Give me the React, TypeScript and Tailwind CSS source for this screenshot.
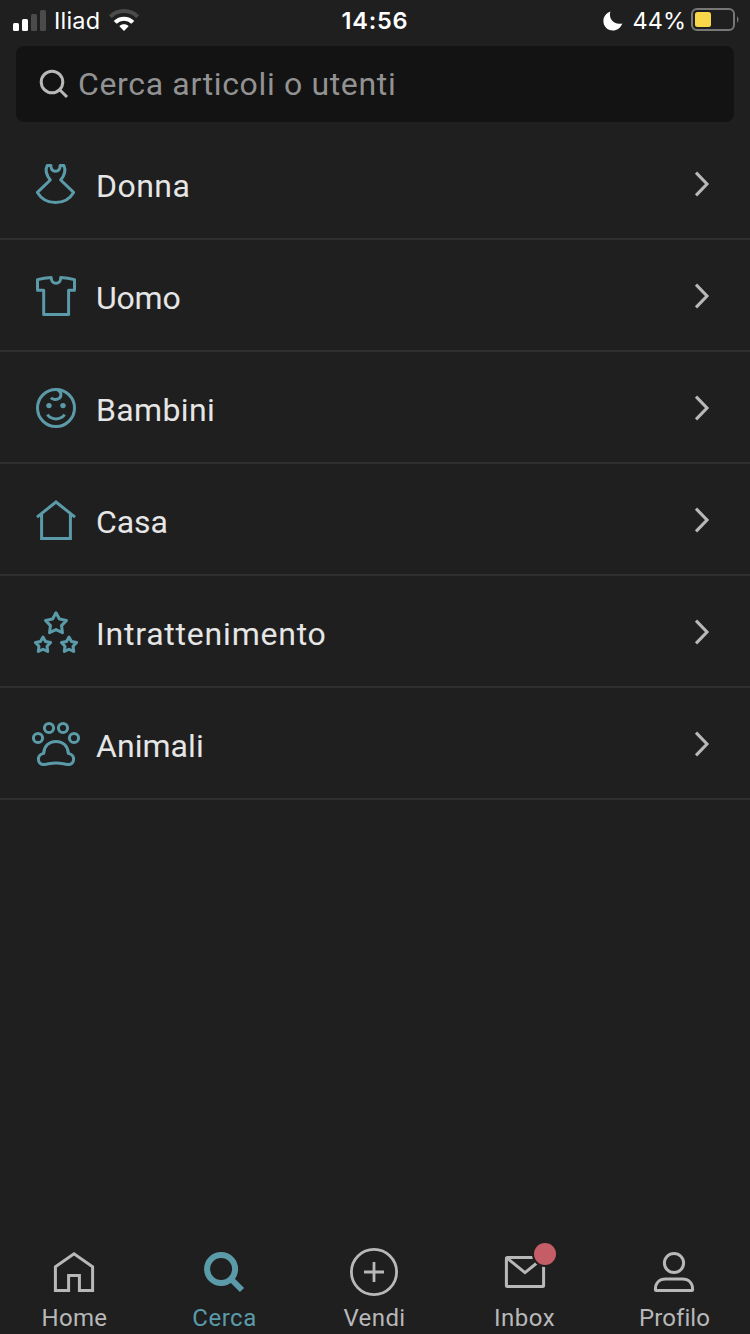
import React from "react";

type IconProps = { children: React.ReactNode; className?: string; width?: number };

function Glyph({ children, className = "", width = 3 }: IconProps) {
  return (
    <svg
      viewBox="0 0 48 48"
      fill="none"
      stroke="currentColor"
      strokeWidth={width}
      className={`block size-12 shrink-0 overflow-visible ${className}`}
    >
      {children}
    </svg>
  );
}

function star(cx: number, cy: number, r: number) {
  return Array.from({ length: 10 }, (_, i) => {
    const a = -Math.PI / 2 + (i * Math.PI) / 5;
    const d = i % 2 ? r * 0.53 : r;
    return `${(cx + d * Math.cos(a)).toFixed(2)},${(cy + d * Math.sin(a)).toFixed(2)}`;
  }).join(" ");
}

const categories = [
  {
    name: "Donna",
    spacing: "tracking-[0.45px]",
    icon: (
      <path
        strokeLinejoin="round"
        d="M18.9 5.4H15.2C12.8 10.5 13.8 14.5 18.3 20L5.4 32.4C9.5 39.2 16 42.5 23.5 42.5S37.6 39.2 41.6 32.4L28.7 20C33.2 14.5 34.2 10.5 31.8 5.4H28.1C28.4 9 26.4 11.3 23.5 11.3S18.6 9 18.9 5.4Z"
      />
    ),
  },
  {
    name: "Uomo",
    spacing: "tracking-[-0.2px]",
    icon: (
      <path
        strokeLinejoin="round"
        d="M19.2 5.4Q12 5.6 5.5 7.6V18.3H11.7V42.5H36.6V18.3H42.5V7.6Q36 5.6 28.8 5.4C28.8 9 26.8 11.3 24 11.3S19.2 9 19.2 5.4Z"
      />
    ),
  },
  {
    name: "Bambini",
    spacing: "tracking-[0.35px]",
    icon: (
      <>
        <circle cx="24" cy="24" r="18.5" />
        <path d="M19 13.8C21 16 25 16.2 27.4 14.2C30 11.8 29.4 7.8 25.5 5.6M15.3 30.6C20 36.3 28 36.3 32.7 30.6" />
        <circle cx="17" cy="21.6" r="2.7" fill="currentColor" stroke="none" />
        <circle cx="31" cy="21.6" r="2.7" fill="currentColor" stroke="none" />
      </>
    ),
  },
  {
    name: "Casa",
    spacing: "tracking-[-0.1px]",
    icon: <path d="M5 21.2L24 6L43 21.2M9.6 17.5V42.4H38.4V17.5" />,
  },
  {
    name: "Intrattenimento",
    spacing: "tracking-[0.78px]",
    icon: (
      <g strokeLinejoin="round">
        <polygon points={star(24, 15.8, 11)} />
        <polygon points={star(11, 37, 8)} />
        <polygon points={star(37, 37, 8)} />
      </g>
    ),
  },
  {
    name: "Animali",
    spacing: "tracking-[0.05px]",
    icon: (
      <>
        <circle cx="17" cy="8" r="4.6" />
        <circle cx="31" cy="8" r="4.6" />
        <circle cx="6" cy="18" r="4.6" />
        <circle cx="42" cy="18" r="4.6" />
        <path
          strokeLinejoin="round"
          d="M24 21.4C16.5 21.4 12 26.5 11.7 33.4C8.5 34 6.4 36.3 6.4 39.3C6.4 42.8 9 44.9 12.4 44.5C16.5 44 19 42.9 24 42.9S31.5 44 35.6 44.5C39 44.9 41.6 42.8 41.6 39.3C41.6 36.3 39.5 34 36.3 33.4C36 26.5 31.5 21.4 24 21.4Z"
        />
      </>
    ),
  },
];

const tabs = [
  {
    name: "Home",
    spacing: "tracking-[0.3px]",
    icon: (
      <Glyph>
        <path d="M5.4 42.6V18.8L24 5.8L42.6 18.8V42.6H29.4V27.4H18.6V42.6Z" />
      </Glyph>
    ),
  },
  {
    name: "Cerca",
    spacing: "tracking-[0.5px]",
    icon: (
      <Glyph width={6}>
        <circle cx="21.1" cy="21" r="14" />
        <path d="M31 31L42 42" />
      </Glyph>
    ),
  },
  {
    name: "Vendi",
    spacing: "tracking-[0.4px]",
    icon: (
      <Glyph width={2.8}>
        <circle cx="24" cy="24" r="22.6" />
        <path d="M24 14V34M14 24H34" />
      </Glyph>
    ),
  },
  {
    name: "Inbox",
    spacing: "tracking-[0.5px]",
    icon: (
      <Glyph>
        <rect x="6.4" y="9.4" width="37.2" height="29.2" rx="1" />
        <path d="M7 10L25 24.6L43 10" />
        <circle cx="45" cy="6" r="13" fill="#1f1f1f" stroke="none" />
        <circle cx="45" cy="6" r="11" fill="#c45d65" stroke="none" />
      </Glyph>
    ),
  },
  {
    name: "Profilo",
    spacing: "tracking-[0.1px]",
    icon: (
      <Glyph>
        <circle cx="24" cy="15" r="9.6" />
        <path
          strokeLinejoin="round"
          d="M5.4 41.6C5.4 35 9.5 31.1 15.5 31.1H32.5C38.5 31.1 42.6 35 42.6 41.6Q42.6 42.6 41.6 42.6H6.4Q5.4 42.6 5.4 41.6Z"
        />
      </Glyph>
    ),
  },
];

function StatusBar() {
  return (
    <header className="grid h-[46px] grid-cols-3 pb-[5px] font-['Inter',sans-serif] text-[23.5px] leading-[41px] text-white">
      <div className="flex items-center pl-[13px]">
        <div className="flex h-[21px] items-end gap-[3px]">
          <span className="h-2 w-1.5 rounded-[1.5px] bg-white" />
          <span className="h-3 w-1.5 rounded-[1.5px] bg-white" />
          <span className="h-[17px] w-1.5 rounded-[1.5px] bg-[#4b4b4b]" />
          <span className="h-[21px] w-1.5 rounded-[1.5px] bg-[#4b4b4b]" />
        </div>
        <span className="ml-2 tracking-[0.2px]">Iliad</span>
        <svg viewBox="0 0 30 22" className="mb-px ml-[9px] h-[22px] w-[30px]" fill="none">
          <path d="M1.4 7.8C8.8 .2 21.2 .2 28.6 7.8" stroke="#4b4b4b" strokeWidth="4" />
          <path d="M6.2 13.4C11 8.5 19 8.5 23.8 13.4" stroke="white" strokeWidth="4.2" />
          <path d="M15 22L10.4 17.2C12.8 14.7 17.2 14.7 19.6 17.2Z" fill="white" />
        </svg>
      </div>
      <div className="text-center font-semibold tracking-[0.8px]">14:56</div>
      <div className="flex items-center justify-end pr-3">
        <svg viewBox="0 0 20 20" className="h-5 w-5" fill="white">
          <path d="M7.4 .6C5.2 7.8 10.8 14.4 19.4 12.5C17.5 17 14 19.5 9.8 19.5C4.4 19.5 .4 15.3 .4 10C.4 5.8 3.2 2 7.4 .6Z" />
        </svg>
        <span className="ml-[10px]">44%</span>
        <svg viewBox="0 0 48 24" className="mb-px ml-[5px] -mr-px h-6 w-12" fill="none">
          <rect x="1" y="1" width="42" height="21" rx="5" stroke="#777777" strokeWidth="2" />
          <rect x="4" y="4" width="16" height="15" rx="2.5" fill="#f8d74a" />
          <path d="M46 8Q49 11.5 46 15Z" fill="#777777" />
        </svg>
      </div>
    </header>
  );
}

export default function App() {
  return (
    <div className="flex h-[1334px] w-[750px] flex-col overflow-hidden bg-[#1f1f1f] font-['Roboto',sans-serif] text-[#e6e6e6]">
      <StatusBar />
      <div className="mx-4 flex h-[76px] shrink-0 items-center rounded-lg bg-[#131313] pl-[22px]">
        <svg viewBox="0 0 32 32" className="size-8" fill="none" stroke="#b8b8b8" strokeWidth="3">
          <circle cx="14" cy="14" r="10.8" />
          <path d="M21.7 21.7L29 29" />
        </svg>
        <span className="ml-2 text-[32px] leading-9 tracking-[0.65px] text-[#929292]">Cerca articoli o utenti</span>
      </div>
      <main className="mt-1.5 flex-1">
        {categories.map(({ name, icon, spacing }) => (
          <div key={name} className="flex h-28 items-center border-b-2 border-[#2e2e2e] pt-0.5 pr-10 pl-8">
            <Glyph className="text-[#5b9ba9]">{icon}</Glyph>
            <span className={`mt-1 ml-4 flex-1 text-[32px] leading-9 ${spacing}`}>{name}</span>
            <svg viewBox="0 0 16 28" className="h-7 w-4" fill="none" stroke="#b8b8b8" strokeWidth="3.1">
              <path d="M2 2.6L13 14L2 25.4" />
            </svg>
          </div>
        ))}
      </main>
      <nav className="-ml-px flex h-[86px] w-[750px]">
        {tabs.map(({ name, icon, spacing }) => (
          <div
            key={name}
            className={`flex w-[150px] flex-col items-center ${name === "Cerca" ? "text-[#5b9ba9]" : "text-[#b8b8b8]"}`}
          >
            {icon}
            <span className={`mt-2 ml-px text-[24px] leading-7 ${spacing}`}>{name}</span>
          </div>
        ))}
      </nav>
    </div>
  );
}
